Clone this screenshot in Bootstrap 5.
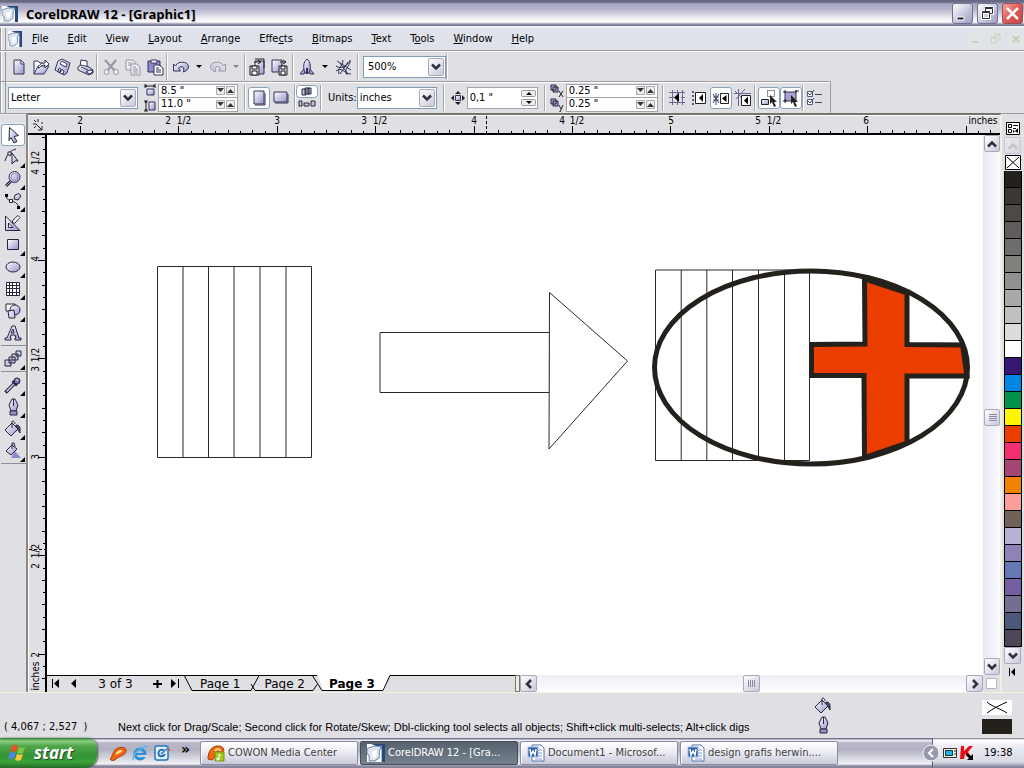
<!DOCTYPE html>
<html lang="en">
<head>
<meta charset="utf-8">
<meta name="viewport" content="width=device-width, initial-scale=1">
<title>CorelDRAW 12 - [Graphic1]</title>
<link rel="stylesheet" href="https://cdn.jsdelivr.net/npm/bootstrap@5.3.0/dist/css/bootstrap.min.css">
<style>
:root{--face:#e0dfe4;--ink:#32325a;--edge:#9d9da1}
body{font-family:"DejaVu Sans Condensed","DejaVu Sans",sans-serif;font-size:11px;line-height:14px;color:#000;background:var(--face);height:100vh;overflow:hidden}
button,input,select{font:inherit;color:inherit;border-radius:0}
button{border:0;background:none;padding:0}
svg{display:block;flex:none}
.ic{width:18px;height:18px}
.titlebar{height:26px;padding:1px 1px 0 0;background:linear-gradient(#696984 0,#696984 2px,#aaa9c4 4px,#b4b3cb 9px,#e6e6ee 17px,#fff 22px,#c8c8d8 23px,#75758f 25px)}
.titlebar h1{font:bold 13px/24px "Open Sans","Noto Sans",sans-serif;text-shadow:1px 1px 0 #c5c5d0}
.winbtn{width:21px;height:21px;border:1px solid #70708f;border-radius:3px;background:linear-gradient(135deg,#fff,#c2c1da 60%,#9f9ebf)}
.winbtn.x-close{background:linear-gradient(135deg,#f4a8a0,#dc5c55 50%,#c2474a);border-color:#a04a55}
.menubar{height:25px;background:#dfe2eb;border-top:2px solid #f3f3f6;border-bottom:1px solid var(--edge)}
.menubar a{color:#000;text-decoration:none;padding-right:19px}
.grip{width:6px;align-self:stretch;border-left:1px solid #9a9aa2;border-right:1px solid #9a9aa2;margin-right:2px;background:linear-gradient(90deg,#fff 1px,var(--face) 1px);flex:none}
.mdi{width:16px;height:16px;background:#e1e5e6}
.toolrow{height:30px;border-top:1px solid #fff}
.proprow{height:32px;width:831px;border-top:1px solid var(--edge);border-right:1px solid var(--edge);box-shadow:inset 0 1px #fff}
.tb{width:22px;height:22px;display:flex;align-items:center;justify-content:center;flex:none}
.tb.on{background:#fff;border:1px solid #86a3bb;border-radius:3px}
.caret{width:13px;height:22px;display:flex;align-items:center;justify-content:center;flex:none}
.caret::after{content:"";border:3px solid transparent;border-top-color:#000;border-bottom:0}
.off{opacity:.42}
.vsep{width:2px;height:26px;background:#a5a5a9;border-right:1px solid #fff;flex:none}
.g2{margin-left:2px}.g6{margin-left:6px}
.combo{position:relative;border:1px solid #7f9db9;background:#fff;height:22px;flex:none}
.combo select{appearance:none;border:0;background:transparent;width:100%;height:20px;padding:0 18px 0 2px;outline:0}
.combo svg,.sbtn{background:linear-gradient(135deg,#fff,#c9c8da);border:1px solid #a9a8bd;border-radius:2px}
.combo svg{position:absolute;right:1px;top:1px;width:16px;height:18px;pointer-events:none}
.combo.zoomlevel select{padding-left:4px}
.spin{border:1px solid #9fa6ae;background:#fff;height:14px;padding-right:2px;display:flex;align-items:center;gap:1px}
.spin+.spin{border-top:0}
.spin.tall{height:22px;padding-right:1px}
.spin input{border:0;width:100%;min-width:0;padding:0 0 0 2px;height:12px;background:none;outline:0}
.spin button{flex:none}
.cw80,.cw92,.cw71,.cw83,.cw130{flex:none}
.cw80{width:80px}.cw92{width:92px}.cw71{width:71px}.cw83{width:83px}.cw130{width:130px}
.toolbox{width:28px;border-right:2px solid #888886;border-top:1px solid var(--edge)}
.toolbox .t{width:24px;height:22px;position:relative;display:flex;align-items:center;justify-content:center;flex:none}
.toolbox .t.on{background:#fff;border:1px solid #86a3bb;border-radius:3px}
.toolbox .fly::after{content:"";position:absolute;right:0;bottom:0;border-left:5px solid transparent;border-bottom:5px solid #000}
.toolbox hr{width:25px;margin:1px 0 2px;border-top:1px solid #8f8f94;opacity:1}
.sheet{display:grid;grid-template-columns:19px minmax(0,1fr) 17px;grid-template-rows:20px minmax(0,1fr) 17px;border-top:2px solid #74746c;border-right:2px solid #f0f0e0}
.hrule{grid-column:1/4;overflow:hidden;border-bottom:2px solid #000;background:var(--face);border-top:1px solid #fff}
.vrule{grid-row:2/4;border-left:1px solid #fff;border-right:2px solid #000;overflow:hidden}
.page-area{background:#fff;min-height:0}
.page-area svg{width:100%;height:100%}
.vscroll{background:linear-gradient(90deg,#e8eaf2,#fafaff);border-left:1px solid #e5e5ef}
.hscroll{background:linear-gradient(#eeeef4,#fdfdff)}
.sbtn{width:17px;height:17px;display:flex;align-items:center;justify-content:center;flex:none}
.vscroll .sbtn{width:16px}
.tabs{width:468px;position:relative;flex:none}
.tabs>svg{position:absolute;left:0;top:0}
.tabs button,.tabs span{position:relative;height:16px;font:12px/16px "DejaVu Sans",sans-serif;flex:none}
.tabs span{width:75px;text-align:center}
.tabs button.cur{font-weight:bold}
.split{width:5px;border:1px solid #77776f;background:#efeee4;flex:none}
.palette{width:22px;padding:6px 0 0 2px;border-top:1px solid var(--edge)}
.sw{display:block;width:18px;height:17px;border:1px solid #000;border-width:0 1px 1px}
.status{height:46px;border-top:1px solid #f3f1e2}
.hint{font-family:"Liberation Sans",sans-serif}
.coords{width:118px;flex:none}
.marks{width:18px;margin-right:150px}
.taskbar{height:30px;background:linear-gradient(#73738f 0,#73738f 1px,#f7f7fb 2px,#b8b7c9 5px,#b2b2c3 12px,#d6d6e0 20px,#f0f0f5 26px,#85859c 28px)}
.start{width:97px;height:30px;border-radius:0 10px 12px 0;color:#fff;background:linear-gradient(#2f7d33 0,#8bd183 3px,#4fa64a 8px,#349333 18px,#3ba33a 24px,#226b25 30px);box-shadow:1px 0 2px #555;font:italic bold 17px/26px "Open Sans","Noto Sans",sans-serif;text-shadow:1px 1px 1px #1c4a1d}
.quick{width:103px;padding-left:10px}
.more{font:bold 14px/20px "DejaVu Sans",sans-serif;padding:0 0 8px 8px}
.tasks{gap:2px}
.task{width:158px;height:24px;border:1px solid #8b8ba3;border-radius:2px;background:linear-gradient(#fff,#ececf3 45%,#c9c9d9);color:#404040;padding:0 6px;display:flex;align-items:center;gap:3px;white-space:nowrap;flex:0 1 158px;min-width:0;overflow:hidden;box-shadow:inset 1px 1px #fff}
.task.on{background:linear-gradient(#57626e,#75818e);color:#fff;border-color:#444e5a;box-shadow:none}
.tray{width:92px;height:30px;border-left:1px solid #62627e;background:linear-gradient(#73738f 0,#fff 2px,#ececf3 8px,#d9d9e5 24px,#85859c 29px);position:relative}
.tray .hide{position:absolute;left:-11px;top:6px}
.trayic{margin-left:9px}
</style>
</head>
<body class="d-flex flex-column">

<svg width="0" height="0" class="position-absolute" aria-hidden="true">
<defs>
<linearGradient id="g" x1="0" y1="0" x2="1" y2="1"><stop offset="0" stop-color="#fff"/><stop offset="1" stop-color="#9694cb"/></linearGradient>
<symbol id="corel" viewBox="0 0 16 16"><path d="M0 0h16v16H0z" fill="#fff"/><path d="M4 0h12v16h-3V4z" fill="#23497e"/><path d="M0 4l6-2 7 0-2 4v6l-4 3H2v-4L0 8z" fill="#dfe5ee" stroke="#7690ae"/><path d="M4 7l5-2-1 7H5z" fill="#fff"/></symbol>
<symbol id="new" viewBox="0 0 18 18"><path d="M4 2h7l3 3v11H4z" fill="url(#g)" stroke="#32325a"/><path d="M11 2v4h3" fill="#fff" stroke="#32325a"/></symbol>
<symbol id="open" viewBox="0 0 18 18"><path d="M2 16V3h4l2 2h3v3" fill="#fff" stroke="#32325a"/><path d="M2 16l4-8h11l-5 8z" fill="url(#g)" stroke="#32325a"/><path d="M6 10c1-4 4-5 7-5V2l4 4-4 4V7c-3 0-4 1-6 3z" fill="#fff" stroke="#32325a"/></symbol>
<symbol id="save" viewBox="0 0 18 18"><path d="M8 1l8 4-3 10-3 2-9-5L4 3z" fill="url(#g)" stroke="#32325a"/><path d="M8 3l5 3-1 3-6-3zM5 10l5 3-1 3-5-2z" fill="#fff" stroke="#32325a"/><path d="M7 12l-1 2" stroke="#32325a" stroke-width="2"/></symbol>
<symbol id="print" viewBox="0 0 18 18"><path d="M4 8l1-6 6 1v5" fill="#fff" stroke="#32325a"/><path d="M2 9l3-2 8 2 4 3v3l-4 2-11-5z" fill="url(#g)" stroke="#32325a"/><path d="M5 9l7 3M10 14l4 2 3-3-3-1z" stroke="#32325a" fill="#fff"/></symbol>
<symbol id="cut" viewBox="0 0 18 18"><path d="M3 2l10 11M14 2L5 13" stroke="#32325a" stroke-width="2"/><circle cx="4.500" cy="14" r="2.500" fill="#fff" stroke="#32325a"/><circle cx="14" cy="14" r="2.500" fill="#fff" stroke="#32325a"/></symbol>
<symbol id="copy" viewBox="0 0 18 18"><path d="M2 2h7l2 2v8H2z" fill="#fff" stroke="#32325a"/><path d="M4 5h4M4 7h3" stroke="#32325a"/><path d="M7 6h6l3 3v8H7z" fill="#fff" stroke="#32325a"/><path d="M9 9h3M9 11h5M9 13h5M9 15h5" stroke="#32325a"/></symbol>
<symbol id="paste" viewBox="0 0 18 18"><path d="M2 3h12v11H2z" fill="#8e8cc6" stroke="#32325a"/><path d="M5 2h6v3H5z" fill="#fff" stroke="#32325a"/><path d="M8 7h5l4 3v7H8z" fill="#fff" stroke="#32325a"/><path d="M10 10h3M10 12h5M10 14h5" stroke="#32325a"/></symbol>
<symbol id="undo" viewBox="0 0 18 18"><path d="M1.500 6v7h7l-2-3c4-3 6-1 5 4 6-2 7-8 1-9.500C8 3.500 5 5 3.500 8z" fill="url(#g)" stroke="#32325a"/></symbol>
<symbol id="import" viewBox="0 0 18 18"><path d="M7 3h9v13H7z" fill="url(#g)" stroke="#32325a"/><path d="M7 1h9v9" fill="none" stroke="#222"/><path d="M2 8h9v9H2z" fill="#cfcee4" stroke="#222"/><path d="M4 8h5v3H4zM4 13h5v4H4z" fill="#fff" stroke="#222"/><path d="M6 4h7M10 2l3 2-3 2" fill="none" stroke="#222"/></symbol>
<symbol id="export" viewBox="0 0 18 18"><path d="M2 2h10v12H2z" fill="url(#g)" stroke="#32325a"/><path d="M9 8h8v9H9z" fill="#cfcee4" stroke="#222"/><path d="M11 8h4v3h-4zM11 13h4v4h-4z" fill="#fff" stroke="#222"/><path d="M10 4h6M13 2l3 2-3 2" fill="none" stroke="#222"/></symbol>
<symbol id="rocket" viewBox="0 0 18 18"><path d="M6 11l-4 5h4l1-2M12 11l4 5h-4l-1-2" fill="#aaa9d0" stroke="#32325a"/><path d="M9 1c4 3 4 9 2 14H7C5 10 5 4 9 1z" fill="url(#g)" stroke="#32325a"/><path d="M9 10v6" stroke="#32325a" stroke-width="2"/></symbol>
<symbol id="web" viewBox="0 0 18 18"><path d="M2 3l14 9M1 8c6 4 10-1 15-5M4 16C2 9 8 9 8 2M12 17c-4-6 3-8 3-15M1 13c6-5 8 3 15 3M5 5l8 11M5 16l8-12" fill="none" stroke="#32325a"/></symbol>
<symbol id="pw" viewBox="0 0 12 12"><path d="M1 0v4M11 0v4M1 2h10M3 1L1 2l2 1M9 1l2 1-2 1" stroke="#222" fill="none"/><path d="M3 5h7v6H3z" fill="url(#g)" stroke="#32325a"/></symbol>
<symbol id="ph" viewBox="0 0 12 12"><path d="M0 1h4M0 11h4M2 1v10M1 3l1-2 1 2M1 9l1 2 1-2" stroke="#222" fill="none"/><path d="M5 2h6v8H5z" fill="url(#g)" stroke="#32325a"/></symbol>
<symbol id="portrait" viewBox="0 0 18 18"><path d="M4 2h10v13H4z" fill="url(#g)" stroke="#32325a"/><path d="M5 16h10V4" stroke="#32325a" fill="none"/></symbol>
<symbol id="landscape" viewBox="0 0 18 18"><path d="M2 3h13v10H2z" fill="url(#g)" stroke="#32325a"/><path d="M3 14h13V5" stroke="#32325a" fill="none"/></symbol>
<symbol id="nudge" viewBox="0 0 14 14"><path d="M7 0l3 3H4zM7 14l3-3H4zM0 7l3-3v6zM14 7l-3-3v6z" fill="#222"/><path d="M4.500 4.500h5v5h-5z" fill="url(#g)" stroke="#32325a"/></symbol>
<symbol id="dupx" viewBox="0 0 14 14"><path d="M1 1h5v5H1zM3 3h5v5H3z" fill="#a9a8d5" stroke="#26263f"/><path d="M9 7l4 6M13 7l-4 6" stroke="#222"/></symbol>
<symbol id="dupy" viewBox="0 0 14 14"><path d="M1 1h5v5H1zM3 3h5v5H3z" fill="#a9a8d5" stroke="#26263f"/><path d="M9 7l2 4M13 7l-3 7H9" stroke="#222" fill="none"/></symbol>
<symbol id="grid" viewBox="0 0 18 18"><path d="M4.500 1v15M9.500 1v15M14.500 1v15M1 3.500h16M1 8.500h16M1 13.500h16" stroke="#686896"/><path d="M6 5h7v7H6z" fill="#e0dfe4"/><path d="M11 4v9L6 8.500z"/></symbol>
<symbol id="guide" viewBox="0 0 18 18"><path d="M3 2v15" stroke="#5a5a90" stroke-width="2" stroke-dasharray="2 2"/><path d="M5.500 3.500h10v11h-10z" fill="#fff" stroke="#222"/><path d="M13 5v8L9 9z"/></symbol>
<symbol id="snapobj" viewBox="0 0 18 18"><path d="M1 5l6 9M7 5l-6 9M4 4v12M1 8h6M1 11h6" stroke="#42426f"/><path d="M8.500 4.500h8v10h-8z" fill="#fff" stroke="#222"/><path d="M14.500 6v7L10 9.500z"/></symbol>
<symbol id="dynamic" viewBox="0 0 18 18"><path d="M2 10L11 0M4.500 0v17M0 4.500h17M1 2l9 9" stroke="#686896"/><path d="M7.500 6.500h9v10h-9z" fill="#fff" stroke="#222"/><path d="M14 7.500v8L10 11.500z"/></symbol>
<symbol id="outline" viewBox="0 0 18 18"><path d="M7.500 1.500h7v6h-7z" fill="none" stroke="#222" stroke-dasharray="1 1"/><path d="M1.500 10.500h7v5h-7z" fill="url(#g)" stroke="#222"/><path d="M10 6l7 7h-3l2 4-2 1-2-5-2 2z" fill="#222"/></symbol>
<symbol id="filled" viewBox="0 0 18 18"><path d="M3 3h11v9H3z" fill="#a6a4cf" stroke="#32325a"/><path d="M1 3h3M3 1v3M13 2h4M14 1v3M1 12h4M3 10v4" stroke="#222"/><path d="M9 6l7 7h-3l2 4-2 1-2-5-2 2z" fill="#222"/></symbol>
<symbol id="opts" viewBox="0 0 18 18"><path d="M1.500 2.500h5v5h-5zM1.500 10.500h5v5h-5z" fill="#fff" stroke="#55557f"/><path d="M2 4l2 2 4-5M2 12l2 2 4-5M9 5.500h7M9 13.500h7" fill="none" stroke="#42426f"/></symbol>
<symbol id="pick" viewBox="0 0 18 18"><path d="M5.500 1.500l9 8-4.500 1 3 5-3 1.500-3-5.500-2 3z" fill="url(#g)" stroke="#26263f"/></symbol>
<symbol id="shape" viewBox="0 0 18 18"><path d="M1 13C3 7 5 3 12 1M7 4l-1 4" stroke="#26263f" fill="none"/><path d="M4 4h3v3H4z" fill="#fff" stroke="#26263f"/><path d="M8 5l6 8h-3l-3 3z" fill="url(#g)" stroke="#26263f"/></symbol>
<symbol id="zoom" viewBox="0 0 18 18"><path d="M8 10l-6 6" stroke="#26263f" stroke-width="3"/><path d="M7 11l-5 5" stroke="#a9a7d8"/><circle cx="10.500" cy="7" r="5.500" fill="url(#g)" stroke="#32325a"/><circle cx="10.500" cy="7" r="3.500" fill="none" stroke="#8a89b5"/></symbol>
<symbol id="curve" viewBox="0 0 18 18"><path d="M2 4c2 8 9 2 13 11" stroke="#222" fill="none"/><path d="M1 2h3v3H1zM13 14h3v3h-3z"/><path d="M5.500 7.500h3v3h-3z" fill="#fff" stroke="#222"/><path d="M10 7l1-4 4-1.500 2 2.500-3 4z" fill="url(#g)" stroke="#26263f"/></symbol>
<symbol id="smart" viewBox="0 0 18 18"><path d="M1.500 2v14.500H16z" fill="url(#g)" stroke="#26263f"/><path d="M4.500 9v4.500H9z" fill="#fff" stroke="#26263f"/><path d="M8 9l1-3 5-4.500 2 2L11 9z" fill="#fff" stroke="#26263f"/></symbol>
<symbol id="rect" viewBox="0 0 18 18"><path d="M3.500 3.500h11v10h-11z" fill="url(#g)" stroke="#26263f"/></symbol>
<symbol id="ellipse" viewBox="0 0 18 18"><ellipse cx="9" cy="9" rx="7" ry="5" fill="url(#g)" stroke="#26263f"/></symbol>
<symbol id="table" viewBox="0 0 18 18"><path d="M2.500 2.500h13v13h-13z" fill="#fff" stroke="#26263f"/><path d="M5.500 2v13M8.500 2v13M12.500 2v13M2 5.500h13M2 8.500h13M2 12.500h13" stroke="#26263f"/></symbol>
<symbol id="basic" viewBox="0 0 18 18"><path d="M2 2h9v7H2z" fill="#fff" stroke="#26263f"/><circle cx="11" cy="8" r="5" fill="url(#g)" stroke="#26263f"/><path d="M4 9l6-1 1 8H5z" fill="#d9d8ee" stroke="#26263f"/></symbol>
<symbol id="text" viewBox="0 0 18 18"><path d="M8 2h3l4 12h2v2h-6v-2h1l-1-3H7l-1 3h1v2H1v-2h2zM9 5l-2 4h3z" fill="url(#g)" stroke="#26263f" fill-rule="evenodd"/></symbol>
<symbol id="blend" viewBox="0 0 18 18"><path d="M12 1h5v5h-5zM8 4h6v6H8zM5 7h6v6H5zM1 10h6v6H1z" fill="url(#g)" stroke="#26263f"/></symbol>
<symbol id="dropper" viewBox="0 0 18 18"><path d="M1.500 16.500L10 8" stroke="#26263f" stroke-width="3.500"/><path d="M2.500 15.500L10 8" stroke="#d8d7ef" stroke-width="1.500"/><path d="M8.500 5l4.500 4.500" stroke="#26263f" stroke-width="2.500"/><circle cx="13" cy="5" r="3" fill="#7876a8" stroke="#26263f"/><path d="M12 4h2" stroke="#fff"/></symbol>
<symbol id="pen" viewBox="0 0 18 18"><path d="M8 1h3l3 6-2 6H7L5 7z" fill="url(#g)" stroke="#26263f"/><path d="M9.500 1v7M6 13h7v4H6z" stroke="#26263f" fill="#9492c4"/></symbol>
<symbol id="bucket" viewBox="0 0 18 18"><path d="M12 5c5 0 4 4 4 8-2-3-2-4-4-4z" fill="#4c4c66" stroke="#26263f"/><path d="M8 3l6 6-7 7-6-6z" fill="url(#g)" stroke="#26263f"/><path d="M8 8V2c0-2 3-1 3 2" fill="none" stroke="#26263f"/></symbol>
<symbol id="ifill" viewBox="0 0 18 18"><path d="M11 9l6 7H7z" fill="#8b89ca"/><path d="M8 3l5 4-6 6-5-4z" fill="url(#g)" stroke="#26263f"/><path d="M8 7V1h2l1 4" fill="none" stroke="#26263f"/></symbol>
<symbol id="dn" viewBox="0 0 14 14"><path d="M3 4.500l4 4 4-4" fill="none" stroke="#30303c" stroke-width="2.500"/></symbol>
<symbol id="spdn" viewBox="0 0 9 9"><path d="M.5.500h8v8h-8z" fill="#eee" stroke="#aaa"/><path d="M1 2h7L4.500 6z" fill="#333"/></symbol>
<symbol id="spup" viewBox="0 0 9 9"><path d="M.5.500h8v8h-8z" fill="#eee" stroke="#aaa"/><path d="M1 7h7L4.500 3z" fill="#333"/></symbol>
<symbol id="flame" viewBox="0 0 18 18"><path d="M1 15c2-1 2-5 5-9 3-3 10-4 11 0 1 5-7 6-10 9-2 2-5 2-6 0z" fill="#ef6812" stroke="#a53a08"/><path d="M7 9c2-3 6-4 6-2s-4 2-6 4z" fill="#ffe09a"/></symbol>
<symbol id="ie" viewBox="0 0 18 18"><circle cx="9" cy="10" r="5" fill="none" stroke="#2d8ed8" stroke-width="3"/><path d="M4 10h10" stroke="#2d8ed8" stroke-width="2"/><path d="M11 12h5" stroke="#d6d6e0" stroke-width="2"/><path d="M3 16c-3-1 1-8 6-11s8-4 7-1" fill="none" stroke="#59b5ed" stroke-width="1.500"/></symbol>
<symbol id="desk" viewBox="0 0 18 18"><rect x="2" y="2" width="13" height="14" rx="2" fill="#e8f4ff" stroke="#2674b8" stroke-width="1.500"/><path d="M11 6c-4-1-6 1-5.500 4s5 3 6.500 0" fill="none" stroke="#2674b8" stroke-width="2"/><path d="M8 10l7-6" stroke="#4a90d0" stroke-width="2"/><path d="M15 6h2" stroke="#d65f20" stroke-width="2"/></symbol>
<symbol id="cowon" viewBox="0 0 18 18"><path d="M1 15C1 7 5 2 11 2c5 0 7 3 5 7l-4-1C8 8 8 15 5 16z" fill="#ef6812" stroke="#a53a08"/><path d="M8 7c2-3 5-2 5 0" stroke="#ffe09a" fill="none" stroke-width="2"/><path d="M8 8h9v9H8z" fill="#a2c91a" stroke="#6e9010"/><path d="M12 15v-5l2 2" stroke="#fff" fill="none"/><circle cx="11" cy="15" r="1.500" fill="#fff"/></symbol>
<symbol id="word" viewBox="0 0 18 18"><path d="M5 1h9l3 3v13H5z" fill="#fff" stroke="#5274ad"/><path d="M11 6h4M11 9h4M11 12h4M8 15h7" stroke="#7d9bd0"/><rect x="1" y="3" width="10" height="10" fill="#2e5fae" stroke="#a8c0ea"/><path d="M3 5l1 6 2-4 2 4 1-6" fill="none" stroke="#fff" stroke-width="1.500"/></symbol>
</defs>
</svg>

<header class="titlebar d-flex align-items-center flex-shrink-0">
  <svg width="16" height="16" class="g2"><use href="#corel"/></svg>
  <h1 class="m-0 ms-2 flex-grow-1">CorelDRAW 12 - [Graphic1]</h1>
  <div class="d-flex g2 gap-1">
    <button class="winbtn" aria-label="Minimize"><svg width="19" height="19"><path d="M4 13h7v3H4z" fill="#222" stroke="#fff"/></svg></button>
    <button class="winbtn" aria-label="Restore"><svg width="19" height="19"><path d="M7.500 4.500h7v5h-3M7 3.500h8M7.500 4v3M4.500 8.500h7v6h-7zM4 7.500h8" fill="none" stroke="#fff" stroke-width="3"/><path d="M7.500 4.500h7v5h-3M7 3.500h8M7.500 4v3M4.500 8.500h7v6h-7zM4 7.500h8" fill="none" stroke="#333"/></svg></button>
    <button class="winbtn x-close" aria-label="Close"><svg width="19" height="19"><path d="M4 4l11 11M15 4L4 15" stroke="#fff" stroke-width="2.500"/></svg></button>
  </div>
</header>

<nav class="menubar d-flex align-items-center flex-shrink-0">
  <span class="grip"></span>
  <svg width="14" height="16" class="me-2" viewBox="0 0 16 16" preserveAspectRatio="none"><use href="#corel"/></svg>
  <span class="g2"></span>
  <a href="#"><u>F</u>ile</a><a href="#"><u>E</u>dit</a><a href="#"><u>V</u>iew</a><a href="#"><u>L</u>ayout</a><a href="#"><u>A</u>rrange</a><a href="#">Effe<u>c</u>ts</a><a href="#"><u>B</u>itmaps</a><a href="#"><u>T</u>ext</a><a href="#">T<u>o</u>ols</a><a href="#"><u>W</u>indow</a><a href="#"><u>H</u>elp</a>
  <div class="ms-auto d-flex">
    <button class="mdi me-1" aria-label="Minimize document"><svg width="16" height="16"><path d="M4 11h6" stroke="#cfcdbd" stroke-width="2"/></svg></button>
    <button class="mdi me-1" aria-label="Restore document"><svg width="16" height="16"><path d="M6 4h6v6M6 3h6M3 7h6v5H3zM3 6h6" fill="none" stroke="#cfcdbd"/></svg></button>
    <button class="mdi" aria-label="Close document"><svg width="16" height="16"><path d="M5 5l6 6M11 5l-6 6" stroke="#cfcdbd" stroke-width="2.500"/></svg></button>
  </div>
</nav>

<div class="toolrow d-flex align-items-center flex-shrink-0" role="toolbar" aria-label="Standard">
  <span class="grip"></span>
  <button class="tb" aria-label="New"><svg class="ic"><use href="#new"/></svg></button>
  <button class="tb" aria-label="Open"><svg class="ic"><use href="#open"/></svg></button>
  <button class="tb" aria-label="Save"><svg class="ic"><use href="#save"/></svg></button>
  <button class="tb" aria-label="Print"><svg class="ic"><use href="#print"/></svg></button>
  <span class="vsep"></span>
  <button class="tb off g2" aria-label="Cut"><svg class="ic"><use href="#cut"/></svg></button>
  <button class="tb off" aria-label="Copy"><svg class="ic"><use href="#copy"/></svg></button>
  <button class="tb" aria-label="Paste"><svg class="ic"><use href="#paste"/></svg></button>
  <span class="vsep"></span>
  <button class="tb g2" aria-label="Undo"><svg class="ic"><use href="#undo"/></svg></button>
  <button class="caret" aria-label="Undo list"></button>
  <button class="tb off g2" aria-label="Redo"><svg class="ic" viewBox="0 0 18 18"><use href="#undo" transform="matrix(-1 0 0 1 18 0)"/></svg></button>
  <button class="caret off" aria-label="Redo list"></button>
  <span class="vsep g2"></span>
  <button class="tb" aria-label="Import"><svg class="ic"><use href="#import"/></svg></button>
  <button class="tb" aria-label="Export"><svg class="ic"><use href="#export"/></svg></button>
  <span class="vsep g2"></span>
  <button class="tb g2" aria-label="Application launcher"><svg class="ic"><use href="#rocket"/></svg></button>
  <button class="caret" aria-label="Launcher list"></button>
  <button class="tb g2" aria-label="Corel web"><svg class="ic"><use href="#web"/></svg></button>
  <span class="vsep g2"></span>
  <div class="combo zoomlevel cw83 ms-1"><select aria-label="Zoom level"><option>500%</option></select><svg><use href="#dn"/></svg></div>
  <span class="vsep"></span>
</div>

<div class="proprow d-flex align-items-center flex-shrink-0" role="toolbar" aria-label="Property bar">
  <span class="grip"></span>
  <div class="combo cw130"><select aria-label="Paper size"><option>Letter</option></select><svg><use href="#dn"/></svg></div>
  <div class="d-flex flex-column gap-1 g6"><svg width="12" height="12"><use href="#pw"/></svg><svg width="12" height="12"><use href="#ph"/></svg></div>
  <div class="cw80 g2">
    <div class="spin"><input aria-label="Paper width" value='8.5 "'><button aria-label="Width down"><svg width="9" height="9"><use href="#spdn"/></svg></button><button aria-label="Width up"><svg width="9" height="9"><use href="#spup"/></svg></button></div>
    <div class="spin"><input aria-label="Paper height" value='11.0 "'><button aria-label="Height down"><svg width="9" height="9"><use href="#spdn"/></svg></button><button aria-label="Height up"><svg width="9" height="9"><use href="#spup"/></svg></button></div>
  </div>
  <span class="vsep g6"></span>
  <button class="tb on g2" aria-label="Portrait"><svg class="ic"><use href="#portrait"/></svg></button>
  <button class="tb" aria-label="Landscape"><svg class="ic"><use href="#landscape"/></svg></button>
  <span class="vsep g2"></span>
  <button class="tb" aria-label="Page layout mode"><svg width="22" height="26"><rect x=".5" y=".5" width="21" height="12" rx="3" fill="#fff" stroke="#86a3bb"/><path d="M6 4h4v6H6zM9 3h4v6H9zM12 3h3v6h-3zM3 16h3v5H3zM8 18h5v3H8zM15 16h4v5h-4z" fill="#c2c1dd" stroke="#26263f"/></svg></button>
  <span class="vsep g2"></span>
  <label for="units" class="g6 text-nowrap">Units:</label>
  <div class="combo cw80"><select id="units"><option>inches</option></select><svg><use href="#dn"/></svg></div>
  <span class="vsep g6"></span>
  <svg width="14" height="14" class="g6"><use href="#nudge"/></svg>
  <div class="spin tall cw71 g2"><input aria-label="Nudge offset" value='0,1 "'><div><button class="d-block" aria-label="Nudge up"><svg width="15" height="9"><rect x=".5" y="1.500" width="14" height="6" rx="1" fill="#eee" stroke="#999"/><path d="M5 6h6L8 3z"/></svg></button><button class="d-block" aria-label="Nudge down"><svg width="15" height="9"><rect x=".5" y="1.500" width="14" height="6" rx="1" fill="#eee" stroke="#999"/><path d="M5 3h6L8 6z"/></svg></button></div></div>
  <span class="vsep g6"></span>
  <div class="d-flex flex-column ms-1"><svg width="14" height="14"><use href="#dupx"/></svg><svg width="14" height="14"><use href="#dupy"/></svg></div>
  <div class="cw92 g2">
    <div class="spin"><input aria-label="Duplicate x" value='0.25 "'><button aria-label="X down"><svg width="9" height="9"><use href="#spdn"/></svg></button><button aria-label="X up"><svg width="9" height="9"><use href="#spup"/></svg></button></div>
    <div class="spin"><input aria-label="Duplicate y" value='0.25 "'><button aria-label="Y down"><svg width="9" height="9"><use href="#spdn"/></svg></button><button aria-label="Y up"><svg width="9" height="9"><use href="#spup"/></svg></button></div>
  </div>
  <span class="vsep ms-1"></span>
  <button class="tb g2" aria-label="Snap to grid"><svg class="ic"><use href="#grid"/></svg></button>
  <button class="tb" aria-label="Snap to guidelines"><svg class="ic"><use href="#guide"/></svg></button>
  <button class="tb on" aria-label="Snap to objects"><svg class="ic"><use href="#snapobj"/></svg></button>
  <button class="tb" aria-label="Dynamic guides"><svg class="ic"><use href="#dynamic"/></svg></button>
  <span class="vsep"></span>
  <button class="tb on g2" aria-label="Draw while moving"><svg class="ic"><use href="#outline"/></svg></button>
  <button class="tb on" aria-label="Treat as filled"><svg class="ic"><use href="#filled"/></svg></button>
  <span class="vsep"></span>
  <button class="tb" aria-label="Options"><svg class="ic"><use href="#opts"/></svg></button>
</div>

<main class="d-flex flex-grow-1 overflow-hidden">
  <div class="toolbox flex-shrink-0 d-flex flex-column align-items-center" role="toolbar" aria-label="Toolbox">
    <span class="w-100 border-top border-bottom border-secondary-subtle p-1"></span>
    <button class="t on" aria-label="Pick"><svg class="ic"><use href="#pick"/></svg></button>
    <button class="t fly" aria-label="Shape"><svg class="ic"><use href="#shape"/></svg></button>
    <button class="t fly" aria-label="Zoom"><svg class="ic"><use href="#zoom"/></svg></button>
    <button class="t fly" aria-label="Curve"><svg class="ic"><use href="#curve"/></svg></button>
    <button class="t" aria-label="Smart drawing"><svg class="ic"><use href="#smart"/></svg></button>
    <button class="t fly" aria-label="Rectangle"><svg class="ic"><use href="#rect"/></svg></button>
    <button class="t fly" aria-label="Ellipse"><svg class="ic"><use href="#ellipse"/></svg></button>
    <button class="t fly" aria-label="Graph paper"><svg class="ic"><use href="#table"/></svg></button>
    <button class="t fly" aria-label="Basic shapes"><svg class="ic"><use href="#basic"/></svg></button>
    <button class="t" aria-label="Text"><svg class="ic"><use href="#text"/></svg></button>
    <hr>
    <button class="t fly" aria-label="Blend"><svg class="ic"><use href="#blend"/></svg></button>
    <hr>
    <button class="t fly" aria-label="Eyedropper"><svg class="ic"><use href="#dropper"/></svg></button>
    <button class="t fly" aria-label="Outline"><svg class="ic"><use href="#pen"/></svg></button>
    <button class="t fly" aria-label="Fill"><svg class="ic"><use href="#bucket"/></svg></button>
    <button class="t fly" aria-label="Interactive fill"><svg class="ic"><use href="#ifill"/></svg></button>
    <hr>
  </div>

  <section class="sheet flex-grow-1">
    <div class="hrule"><svg id="hr" width="100%" height="17"></svg></div>
    <div class="vrule"><svg id="vr" width="16" height="100%"></svg></div>
    <div class="page-area">
      <svg viewBox="47 135 936 540" role="img" aria-label="Striped rectangle, arrow and finished ellipse">
        <g fill="none" stroke="#2b2a29">
          <path d="M157.500 266.500h154v191h-154zM183 266v191M208.500 266v191M234 266v191M260 266v191M286 266v191"/>
          <path d="M380 332.500h169.500v60H380z"/><path d="M549.500 292.500L627.500 361L549 449z" fill="#fff"/>
          <path d="M655.500 270h154v190.500h-154zM681.200 270v190M706.800 270v190M732.500 270v190M758.500 270v190M784.500 270v190"/>
        </g>
        <g stroke="#24211d" stroke-width="5">
          <ellipse cx="811" cy="367.500" rx="156.500" ry="96.500" fill="none"/>
          <path d="M864.500 279l42.500 14v51.500l55.500 .5 4.500 31h-60v67l-42.500 14.500-.5-82h-52.500v-31l53.500-.5z" fill="#eb3d00"/>
        </g>
      </svg>
    </div>
    <div class="vscroll d-flex flex-column justify-content-between">
      <button class="sbtn" aria-label="Scroll up"><svg width="14" height="14" viewBox="0 0 14 14"><path d="M3 9.500l4-4 4 4" fill="none" stroke="#30303c" stroke-width="2.500"/></svg></button>
      <button class="sbtn mt-4" aria-label="Vertical position"><svg width="11" height="11"><path d="M2 2.500h8M2 4.500h8M2 6.500h8M2 8.500h8" stroke="#8a8aa6"/></svg></button>
      <button class="sbtn" aria-label="Scroll down"><svg width="14" height="14"><use href="#dn"/></svg></button>
    </div>
    <div class="d-flex overflow-hidden">
      <div class="tabs d-flex align-items-center">
        <svg width="468" height="17"><path d="M271 0h71l-5 16H276z" fill="#fff"/><path d="M0 .5h270M343 .5h125" stroke="#000"/><path d="M137 0l8 15.500h59l8-15M204 9l4 6.500h58l4-6M265 0l10 15.500h61l7-15" fill="none" stroke="#000"/></svg>
        <button class="ps-1" aria-label="First page"><svg width="11" height="10"><path d="M1.500 0v9" stroke="#000"/><path d="M8 0v9L3 4.500z"/></svg></button>
        <button class="ps-2" aria-label="Previous page"><svg width="8" height="10"><path d="M6 0v9L1 4.500z"/></svg></button>
        <span>3 of 3</span>
        <button aria-label="Add page"><svg width="9" height="10"><path d="M4.500 1v8M0 5h9" stroke="#000" stroke-width="2"/></svg></button>
        <button class="ps-2" aria-label="Last page"><svg width="10" height="10"><path d="M8.500 0v9" stroke="#000"/><path d="M1 0v9l5-4.500z"/></svg></button>
        <button class="ms-3 ps-1">Page 1</button><button class="ms-4">Page 2</button><button class="cur ms-4">Page 3</button>
      </div>
      <span class="split"></span>
      <div class="hscroll d-flex justify-content-between flex-grow-1">
        <button class="sbtn" aria-label="Scroll left"><svg width="14" height="14" viewBox="0 0 14 14"><path d="M9 3L5 7l4 4" fill="none" stroke="#30303c" stroke-width="2.500"/></svg></button>
        <button class="sbtn" aria-label="Horizontal position"><svg width="11" height="11"><path d="M2.500 2v7M4.500 2v7M6.500 2v7M8.500 2v7" stroke="#8a8aa6"/></svg></button>
        <button class="sbtn" aria-label="Scroll right"><svg width="14" height="14" viewBox="0 0 14 14"><path d="M5 3l4 4-4 4" fill="none" stroke="#30303c" stroke-width="2.500"/></svg></button>
      </div>
    </div>
    <button aria-label="Navigator"><svg width="17" height="17"><path d="M3.500 3.500h10v10h-10z" fill="#fff" stroke="#b5b5bd"/></svg></button>
  </section>

  <aside class="palette flex-shrink-0" aria-label="Colour palette">
    <button class="d-block" aria-label="Palette menu"><svg width="18" height="17"><path d="M2.500 2.500h13v12h-13z" fill="#fff" stroke="#000"/><path d="M4.500 4.500h3v3h-3zM4.500 9.500h3v3h-3zM9 5.500h5M9 8.500h3" fill="none" stroke="#000"/><path d="M9 13V10l5 3V8"/></svg></button>
    <button class="sbtn off" aria-label="Palette up"><svg width="14" height="14" viewBox="0 0 14 14"><path d="M3 9.500l4-4 4 4" fill="none" stroke="#999" stroke-width="2.500"/></svg></button>
    <button class="d-block" aria-label="No colour"><svg width="18" height="17"><path d="M1.500 1.500h15v14h-15z" fill="#fff" stroke="#000"/><path d="M3 3l12 11M15 3L3 14" stroke="#000"/></svg></button>
    <div id="swatches"></div>
    <button class="sbtn" aria-label="Palette down"><svg width="14" height="14"><use href="#dn"/></svg></button>
    <button class="d-block" aria-label="Expand palette"><svg width="16" height="16"><path d="M5.500 4v8" stroke="#000"/><path d="M11 4v8L7 8z"/></svg></button>
  </aside>
</main>

<footer class="status flex-shrink-0 d-flex align-items-end">
  <div class="d-flex flex-grow-1 pb-1">
    <span class="ps-1 coords">( 4,067 ; 2,527&nbsp; )</span>
    <span class="hint text-nowrap">Next click for Drag/Scale; Second click for Rotate/Skew; Dbl-clicking tool selects all objects; Shift+click multi-selects; Alt+click digs</span>
  </div>
  <div class="marks d-flex flex-column justify-content-between h-100 py-1"><svg class="ic"><use href="#bucket"/></svg><svg class="ic"><use href="#pen"/></svg></div>
  <div class="d-flex flex-column gap-1 pb-1 me-2 pe-1"><svg width="30" height="15"><path d="M0 0h30v15H0z" fill="#fff"/><path d="M5 2c4 4 14 7 20 11M25 2C20 4 10 9 5 13" fill="none" stroke="#000"/></svg><svg width="30" height="15"><path d="M0 0h30v15H0z" fill="#24211d"/></svg></div>
</footer>

<div class="taskbar d-flex align-items-center flex-shrink-0">
  <button class="start d-flex align-items-center ps-2 gap-1"><svg width="20" height="20" viewBox="0 0 20 20"><path d="M4 3c2-2 4-1 6 0L8 9C6 8 4 8 2 9z" fill="#e8542a"/><path d="M11 4c2 1 4 1 6 0l-2 6c-2 1-4 1-6 0z" fill="#7cc63e"/><path d="M2 10c2-1 4-1 6 0l-2 6c-2-1-4-1-6 0z" fill="#4c86e8"/><path d="M9 11c2 1 4 1 6 0l-2 6c-2 1-4 1-6 0z" fill="#f8c93a"/></svg><span class="g2">start</span></button>
  <div class="quick d-flex align-items-center">
    <button class="tb" aria-label="Media launcher"><svg class="ic"><use href="#flame"/></svg></button>
    <button class="tb" aria-label="Internet Explorer"><svg class="ic"><use href="#ie"/></svg></button>
    <button class="tb" aria-label="Show desktop"><svg class="ic"><use href="#desk"/></svg></button>
    <button class="more" aria-label="More">»</button>
  </div>
  <div class="tasks d-flex flex-grow-1">
    <button class="task"><svg class="ic"><use href="#cowon"/></svg>COWON Media Center</button>
    <button class="task on"><svg class="ic"><use href="#corel"/></svg>CorelDRAW 12 - [Gra...</button>
    <button class="task"><svg class="ic"><use href="#word"/></svg>Document1 - Microsof...</button>
    <button class="task"><svg class="ic"><use href="#word"/></svg>design grafis herwin....</button>
  </div>
  <div class="tray d-flex align-items-center flex-shrink-0">
    <button class="hide" aria-label="Hide icons"><svg width="18" height="18"><circle cx="9" cy="9" r="8" fill="#9999ad" stroke="#f4f4f8"/><path d="M11 5L7 9l4 4" fill="none" stroke="#fff" stroke-width="2"/></svg></button>
    <svg width="16" height="16" class="trayic"><path d="M1.500 3.500h13v9h-13z" fill="#eef0d8" stroke="#333"/><path d="M3.500 5.500h7v5h-7z" fill="#1cb4e8" stroke="#134"/><path d="M13 5v6" stroke="#333" stroke-dasharray="2 1"/></svg>
    <svg width="16" height="16" class="g2"><path d="M1 1h3v5l5-5h4L8 7l3 5H8L5 9l-1 5H0z" fill="#e80c14"/><path d="M7 8l4 3 2-2v6H7l2-2-3-3z"/></svg>
    <time class="ms-2">19:38</time>
  </div>
</div>

<script>
// Half-inch marks are tall; sixteenths and eighths get short ticks.
function ruler(id, horizontal, first, from, to, step, labels, mouse) {
  let d = '', t = '';
  for (let k = from; k <= to; k++) {
    const p = Math.round(first + k * step) + .5, n = k % 8 === 0 ? 7 : k % 2 === 0 ? 3 : 2;
    d += horizontal ? `M${p} 17v${-n}` : `M16 ${p}h${-n}`;
  }
  for (const [s, p] of labels)
    t += horizontal ? `<text x="${p}" y="8">${s}</text>` : `<text transform="translate(10 ${p}) rotate(-90)">${s}</text>`;
  const m = horizontal ? `M${mouse}.5 0v17` : `M0 ${mouse}.5h16`;
  document.getElementById(id).innerHTML = `<path d="${d}" stroke="#000"/><path d="${m}" stroke="#000" stroke-dasharray="3 2"/><g font-size="10" text-anchor="middle">${t}</g>`;
}
ruler('hr', true, 52, -2, 76, 12.3, [['2',52],['2',140],['1/2',156],['3',249],['3',336],['1/2',352],['4',446],['4',534],['1/2',549],['5',643],['5',730],['1/2',746],['6',838],['inches',955]], 458);
ruler('vr', false, 125, -10, 34, 12.3, [['4',37],['1/2',23],['4',124],['3',234],['1/2',220],['3',322],['2',431],['1/2',416],['2',520],['inches',541]], 414);
document.getElementById('hr').insertAdjacentHTML('beforeend', '<rect width="18" height="17" fill="#e0dfe4"/><path d="M5 8h3M10 6V3M8 8l6 6M14 10v4h-4M13 7h2M6 4l2 2M6 12l2-2" fill="none" stroke="#222"/>');
const colours = ['#24211d','#3b3734','#4d4a46','#605c5c','#6d6e6b','#81817e','#919191','#a8a8a6','#c0c0be','#dcddda','#fff','#371573','#0086e5','#00914c','#fff500','#eb3d00','#f42e72','#a34674','#f38200','#fb9d98','#706257','#b9b0d6','#8f82b8','#6478b5','#7460a0','#766e92','#4c5878','#4e4758'];
document.getElementById('swatches').innerHTML = colours.map(c => `<button class="sw" style="background:${c}" aria-label="${c}"></button>`).join('');
</script>
<script src="https://cdn.jsdelivr.net/npm/bootstrap@5.3.0/dist/js/bootstrap.bundle.min.js"></script>
</body>
</html>
